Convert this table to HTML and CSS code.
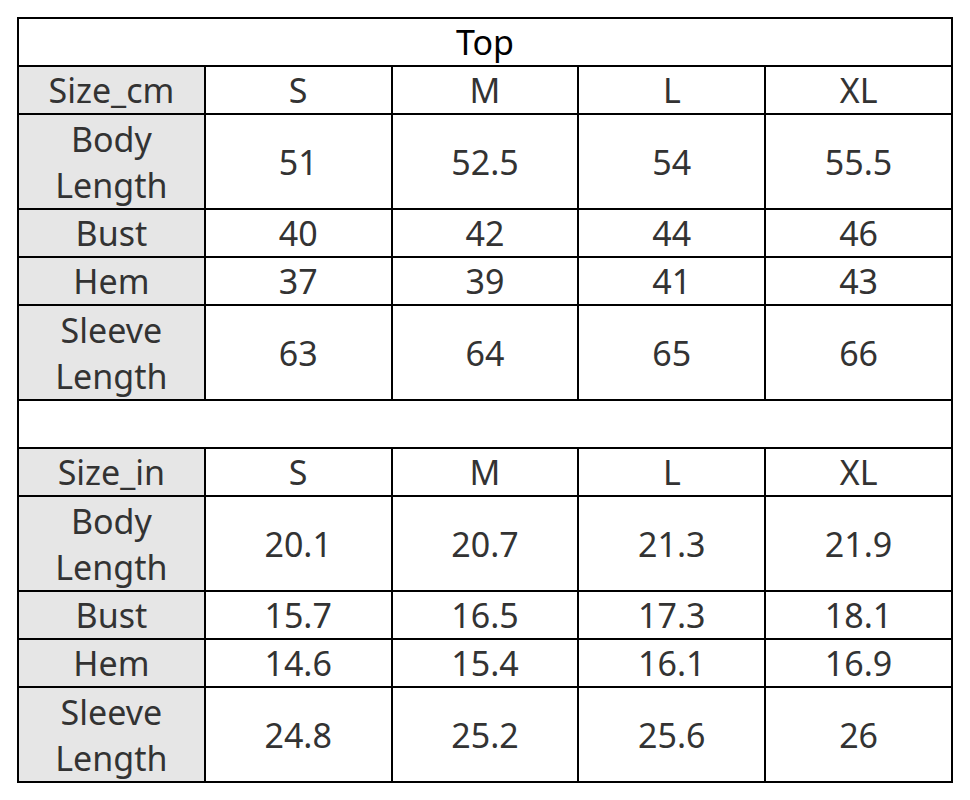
FILE: index.html
```html
<!DOCTYPE html>
<html>
<head>
<meta charset="utf-8">
<link rel="stylesheet" href="styles.css">
</head>
<body>
<table class="size-table">
  <colgroup><col><col><col><col><col></colgroup>
  <tr class="one"><td class="title" colspan="5">Top</td></tr>
  <tr class="one"><td class="label">Size_cm</td><td>S</td><td>M</td><td>L</td><td>XL</td></tr>
  <tr class="two"><td class="label">Body<br>Length</td><td>51</td><td>52.5</td><td>54</td><td>55.5</td></tr>
  <tr class="one"><td class="label">Bust</td><td>40</td><td>42</td><td>44</td><td>46</td></tr>
  <tr class="one"><td class="label">Hem</td><td>37</td><td>39</td><td>41</td><td>43</td></tr>
  <tr class="two"><td class="label">Sleeve<br>Length</td><td>63</td><td>64</td><td>65</td><td>66</td></tr>
  <tr class="one"><td class="blank" colspan="5"></td></tr>
  <tr class="one"><td class="label">Size_in</td><td>S</td><td>M</td><td>L</td><td>XL</td></tr>
  <tr class="two"><td class="label">Body<br>Length</td><td>20.1</td><td>20.7</td><td>21.3</td><td>21.9</td></tr>
  <tr class="one"><td class="label">Bust</td><td>15.7</td><td>16.5</td><td>17.3</td><td>18.1</td></tr>
  <tr class="one"><td class="label">Hem</td><td>14.6</td><td>15.4</td><td>16.1</td><td>16.9</td></tr>
  <tr class="two"><td class="label">Sleeve<br>Length</td><td>24.8</td><td>25.2</td><td>25.6</td><td>26</td></tr>
</table>
</body>
</html>
```
FILE: styles.css
```css
html, body {
  margin: 0;
  padding: 0;
  background: #fff;
}
.size-table {
  margin: 17px 0 0 17px;
  border-collapse: collapse;
  table-layout: fixed;
  width: 936px;
  font-family: "Noto Sans", "Open Sans", sans-serif;
  font-size: 34px;
  color: #333;
}
.size-table col { width: 20%; }
.size-table td {
  border: 2px solid #000;
  padding: 0;
  text-align: center;
  vertical-align: middle;
  line-height: 46px;
}
.size-table tr.one td { height: 46px; }
.size-table tr.two td { height: 93px; }
.size-table td.label { background: #e6e6e6; }
.size-table td.title { color: #000; }
```
